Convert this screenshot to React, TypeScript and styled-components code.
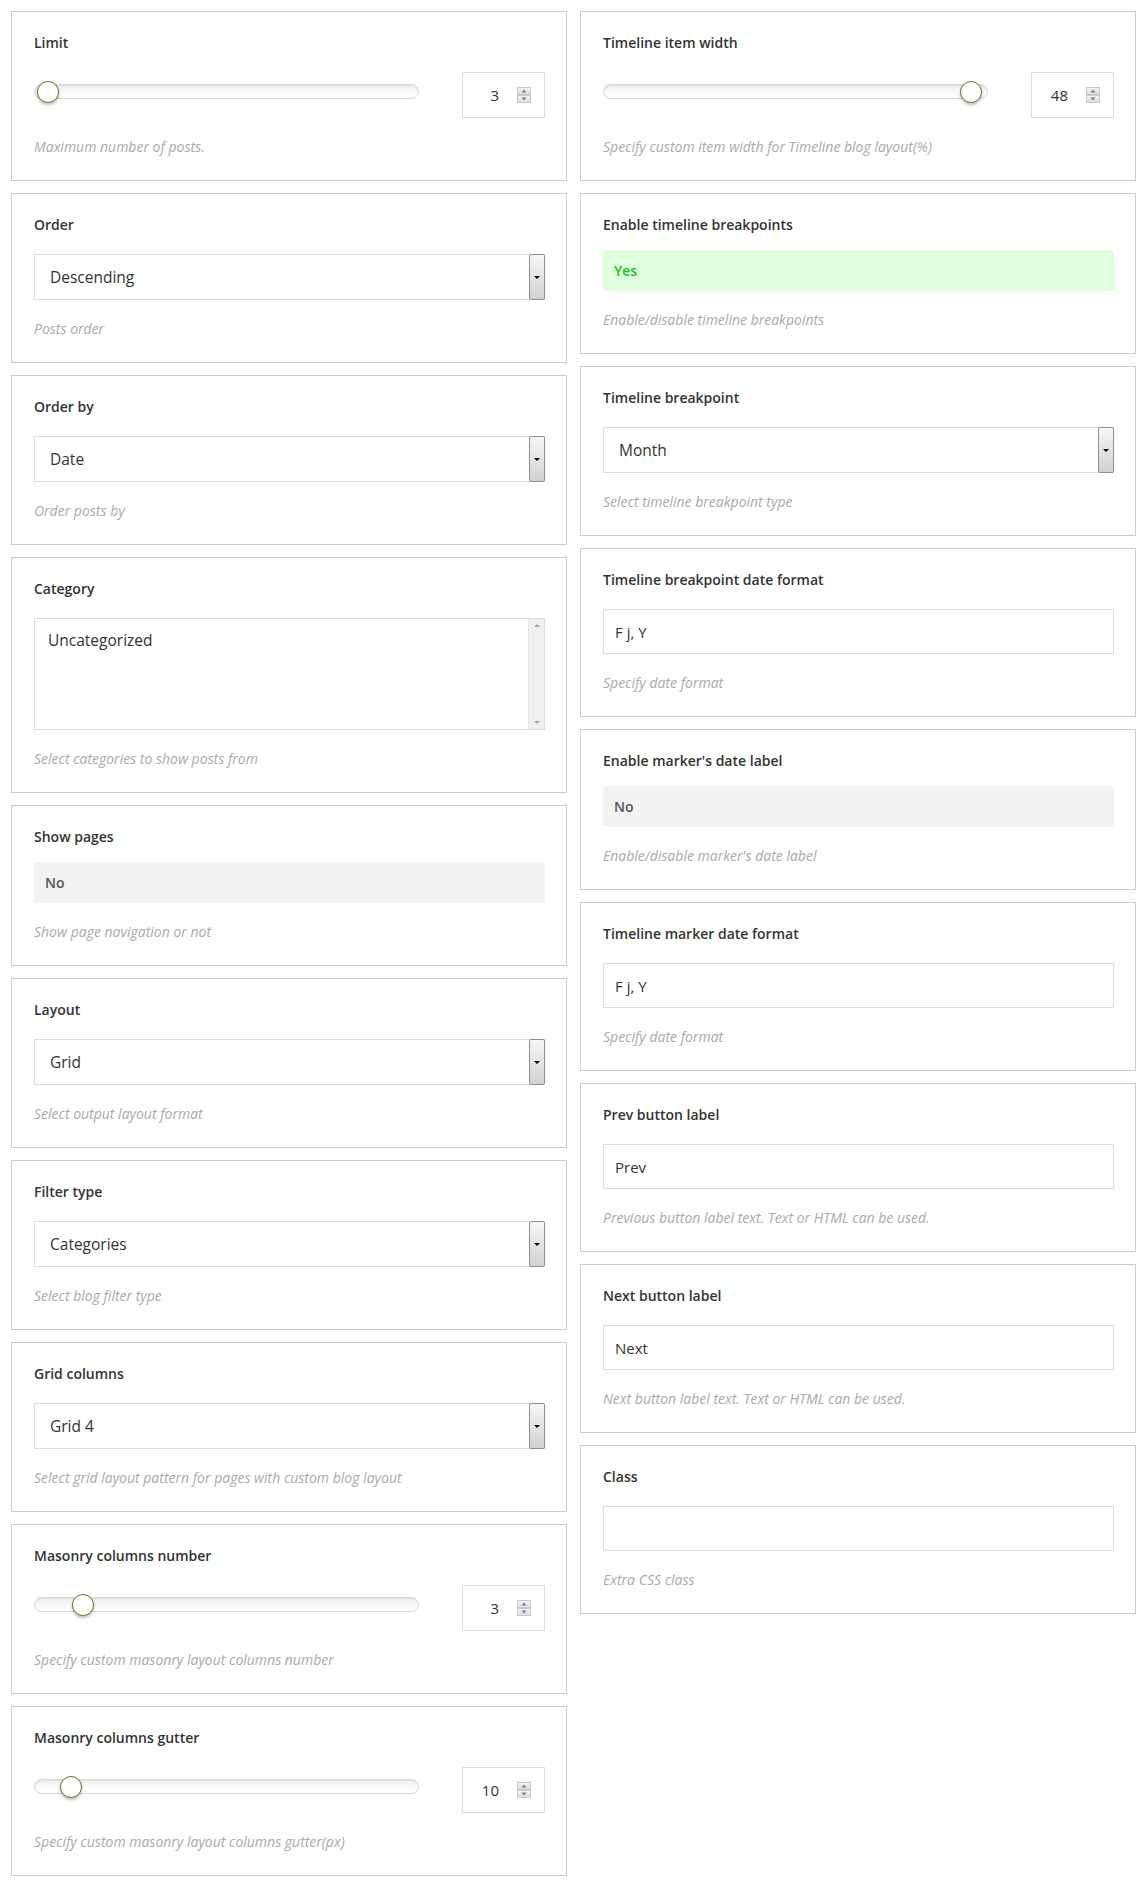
import React from "react";
import styled, { createGlobalStyle } from "styled-components";

const GlobalStyle = createGlobalStyle`
  html, body { margin: 0; padding: 0; background: #ffffff; }
  body { font-family: "Open Sans", "Noto Sans", sans-serif; color: #333; }
  * { box-sizing: border-box; }
`;

const Page = styled.div`
  display: flex;
  gap: 13px;
  padding: 11px 12px 11px 11px;
  align-items: flex-start;
`;

const Column = styled.div`
  width: 556px;
  display: flex;
  flex-direction: column;
  gap: 12px;
`;

const Card = styled.div`
  border: 1px solid #cccccc;
  background: #fff;
  padding: 22px 21px 24px 22px;
`;

const Label = styled.div<{ $gap?: number }>`
  font-size: 14px;
  line-height: 18px;
  font-weight: 600;
  color: #333333;
  margin-bottom: ${(p) => (p.$gap ?? 20)}px;
`;

const Description = styled.div`
  margin-top: 20px;
  font-size: 14px;
  line-height: 18px;
  font-style: italic;
  color: #aaaaaa;
`;

const SliderRow = styled.div`
  display: flex;
  align-items: center;
  justify-content: space-between;
  height: 46px;
`;

const Track = styled.div`
  position: relative;
  width: 385px;
  height: 15px;
  margin-bottom: 7px;
  border: 1px solid #d6d6d6;
  border-radius: 8px;
  background: linear-gradient(#ededed, #fbfbfb 60%, #ffffff);
  box-shadow: inset 0 1px 2px rgba(0, 0, 0, 0.06);
`;

const Thumb = styled.div`
  position: absolute;
  top: 50%;
  width: 22px;
  height: 22px;
  border-radius: 50%;
  border: 1.5px solid #5f7a1e;
  background: #ffffff;
  transform: translate(-50%, -50%);
  box-shadow: 0 2px 3px rgba(0, 0, 0, 0.25);
`;

const NumberBox = styled.div`
  width: 83px;
  height: 46px;
  border: 1px solid #dddddd;
  display: flex;
  align-items: center;
  justify-content: flex-end;
  gap: 18px;
  padding-right: 13px;
  font-size: 15px;
  color: #333;
`;

const SelectBox = styled.div`
  height: 46px;
  border: 1px solid #dddddd;
  display: flex;
  align-items: stretch;
`;

const SelectText = styled.div`
  flex: 1;
  display: flex;
  align-items: center;
  padding-left: 15px;
  font-size: 15.5px;
  color: #333;
`;

const SelectArrow = styled.div`
  width: 16px;
  margin: -1px -1px -1px 0;
  border: 1px solid #8f8f8f;
  border-radius: 2px;
  background: linear-gradient(#f7f7f7, #e2e2e2 55%, #d2d2d2);
  display: flex;
  align-items: center;
  justify-content: center;
`;

const Toggle = styled.div<{ $on?: boolean }>`
  height: 41px;
  border-radius: 3px;
  display: flex;
  align-items: center;
  padding-left: 11px;
  font-size: 14px;
  font-weight: 600;
  background: ${(p) => (p.$on ? "#dfffdf" : "#f3f3f3")};
  color: ${(p) => (p.$on ? "#17c217" : "#555555")};
`;

const TextInput = styled.div`
  height: 45px;
  border: 1px solid #dddddd;
  display: flex;
  align-items: center;
  padding-left: 11px;
  font-size: 15px;
  color: #333;
`;

const ListBox = styled.div`
  height: 112px;
  border: 1px solid #dddddd;
  display: flex;
`;

const ListItems = styled.div`
  flex: 1;
  padding: 10px 13px;
  font-size: 15.5px;
  line-height: 22px;
  color: #333;
`;

const ScrollBar = styled.div`
  width: 16px;
  background: #f0f0f0;
  border-left: 1px solid #e8e8e8;
  display: flex;
  flex-direction: column;
  justify-content: space-between;
  align-items: center;
  padding: 5px 0;
`;

const Triangle = ({ down, color = "#000", w = 6, h = 3 }: { down?: boolean; color?: string; w?: number; h?: number }) => (
  <svg width={w} height={h} viewBox={`0 0 ${w} ${h}`}>
    <polygon points={down ? `0,0 ${w},0 ${w / 2},${h}` : `0,${h} ${w},${h} ${w / 2},0`} fill={color} />
  </svg>
);

const Spinner = () => (
  <svg width="14" height="16" viewBox="0 0 14 16">
    <defs>
      <linearGradient id="spg" x1="0" y1="0" x2="0" y2="1">
        <stop offset="0" stopColor="#f4f4f4" />
        <stop offset="1" stopColor="#dcdcdc" />
      </linearGradient>
    </defs>
    <rect x="0.5" y="0.5" width="13" height="7" fill="url(#spg)" stroke="#c9c9c9" />
    <rect x="0.5" y="8.5" width="13" height="7" fill="url(#spg)" stroke="#c9c9c9" />
    <polygon points="4.5,5.5 9.5,5.5 7,2.5" fill="#6f7fae" />
    <polygon points="4.5,10.5 9.5,10.5 7,13.5" fill="#6f7fae" />
  </svg>
);

type Field =
  | { kind: "slider"; label: string; value: number; min: number; max: number; desc: string }
  | { kind: "select"; label: string; value: string; desc: string }
  | { kind: "toggle"; label: string; on: boolean; desc: string }
  | { kind: "text"; label: string; value: string; desc: string }
  | { kind: "list"; label: string; items: string[]; desc: string };

const leftFields: Field[] = [
  { kind: "slider", label: "Limit", value: 3, min: 1, max: 250, desc: "Maximum number of posts." },
  { kind: "select", label: "Order", value: "Descending", desc: "Posts order" },
  { kind: "select", label: "Order by", value: "Date", desc: "Order posts by" },
  { kind: "list", label: "Category", items: ["Uncategorized"], desc: "Select categories to show posts from" },
  { kind: "toggle", label: "Show pages", on: false, desc: "Show page navigation or not" },
  { kind: "select", label: "Layout", value: "Grid", desc: "Select output layout format" },
  { kind: "select", label: "Filter type", value: "Categories", desc: "Select blog filter type" },
  { kind: "select", label: "Grid columns", value: "Grid 4", desc: "Select grid layout pattern for pages with custom blog layout" },
  { kind: "slider", label: "Masonry columns number", value: 3, min: 1, max: 20, desc: "Specify custom masonry layout columns number" },
  { kind: "slider", label: "Masonry columns gutter", value: 10, min: 0, max: 140, desc: "Specify custom masonry layout columns gutter(px)" },
];

const rightFields: Field[] = [
  { kind: "slider", label: "Timeline item width", value: 48, min: 0, max: 48.8, desc: "Specify custom item width for Timeline blog layout(%)" },
  { kind: "toggle", label: "Enable timeline breakpoints", on: true, desc: "Enable/disable timeline breakpoints" },
  { kind: "select", label: "Timeline breakpoint", value: "Month", desc: "Select timeline breakpoint type" },
  { kind: "text", label: "Timeline breakpoint date format", value: "F j, Y", desc: "Specify date format" },
  { kind: "toggle", label: "Enable marker's date label", on: false, desc: "Enable/disable marker's date label" },
  { kind: "text", label: "Timeline marker date format", value: "F j, Y", desc: "Specify date format" },
  { kind: "text", label: "Prev button label", value: "Prev", desc: "Previous button label text. Text or HTML can be used." },
  { kind: "text", label: "Next button label", value: "Next", desc: "Next button label text. Text or HTML can be used." },
  { kind: "text", label: "Class", value: "", desc: "Extra CSS class" },
];

const Control = ({ f }: { f: Field }) => {
  switch (f.kind) {
    case "slider": {
      const pct = ((f.value - f.min) / (f.max - f.min)) * 100;
      return (
        <SliderRow>
          <Track>
            <Thumb style={{ left: `calc(10px + (100% - 20px) * ${pct / 100})` }} />
          </Track>
          <NumberBox>
            <span>{f.value}</span>
            <Spinner />
          </NumberBox>
        </SliderRow>
      );
    }
    case "select":
      return (
        <SelectBox>
          <SelectText>{f.value}</SelectText>
          <SelectArrow>
            <Triangle down />
          </SelectArrow>
        </SelectBox>
      );
    case "toggle":
      return <Toggle $on={f.on}>{f.on ? "Yes" : "No"}</Toggle>;
    case "text":
      return <TextInput>{f.value}</TextInput>;
    case "list":
      return (
        <ListBox>
          <ListItems>
            {f.items.map((i) => (
              <div key={i}>{i}</div>
            ))}
          </ListItems>
          <ScrollBar>
            <Triangle color="#a3a3a3" w={6} h={3} />
            <Triangle down color="#a3a3a3" w={6} h={3} />
          </ScrollBar>
        </ListBox>
      );
  }
};

const FieldCard = ({ f }: { f: Field }) => (
  <Card>
    <Label $gap={f.kind === "toggle" ? 16 : 20}>{f.label}</Label>
    <Control f={f} />
    <Description>{f.desc}</Description>
  </Card>
);

export default function App() {
  return (
    <>
      <GlobalStyle />
      <Page>
        <Column>
          {leftFields.map((f) => (
            <FieldCard key={f.label} f={f} />
          ))}
        </Column>
        <Column>
          {rightFields.map((f) => (
            <FieldCard key={f.label} f={f} />
          ))}
        </Column>
      </Page>
    </>
  );
}
